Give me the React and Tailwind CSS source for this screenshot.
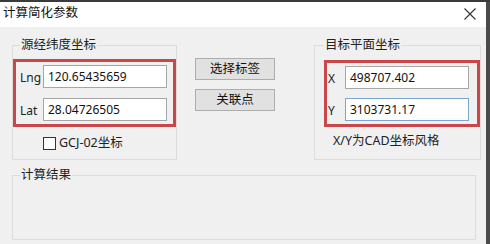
import React from "react";

const F = "font-['Noto_Sans','Noto_Sans_CJK_SC',sans-serif]";

function Field({ label, value, focused, labelW }) {
  return (
    <div className="flex items-center">
      <span className={`${labelW} text-[12px] leading-[16px] pt-[3px] text-[#222]`}>{label}</span>
      <div
        className={`w-[124px] h-[23px] bg-white border flex items-center pl-[4px] text-[12px] leading-[16px] text-[#111] ${
          focused ? "border-[#7aa6d2]" : "border-[#a6a6a6]"
        }`}
      >
        {value}
      </div>
    </div>
  );
}

export default function App() {
  return (
    <div className={`w-[490px] h-[244px] overflow-hidden flex flex-col bg-[#f0f0f0] text-black ${F}`}>
      <div className="h-[2px] bg-[#3a3a3a] shrink-0" />
      <div className="flex flex-1 min-h-0">
        <div className="w-[486px] flex flex-col">
          <div className="h-[25px] bg-white flex items-center justify-between pl-[3px] pr-[10px] shrink-0">
            <span className="text-[12.5px] leading-[16px] -mt-[3px] text-[#111]">计算简化参数</span>
            <svg width="12" height="12" viewBox="0 0 12 12" className="-mt-[2px]">
              <path d="M0.5 0.5 L11.5 11.5 M11.5 0.5 L0.5 11.5" stroke="#333" strokeWidth="1.1" fill="none" />
            </svg>
          </div>
          <div className="flex-1 flex flex-col pl-[12px] pt-[10px]">
            <div className="flex items-start">
              <fieldset className="w-[163px] h-[123px] border border-[#dcdcdc] p-0 m-0">
                <legend className="ml-[7px] px-[1px] text-[12.5px] leading-[16px] text-[#222]">源经纬度坐标</legend>
                <div className="w-[163px] mt-[6px] border-[3px] border-[#c9464b] pt-[3px] pl-[4px] pb-[3px] flex flex-col gap-[10px]">
                  <Field label="Lng" value="120.65435659" labelW="w-[23px]" />
                  <Field label="Lat" value="28.04726505" labelW="w-[23px]" />
                </div>
                <label className="flex items-center ml-[30px] mt-[8px]">
                  <span className="w-[13px] h-[13px] bg-white border border-[#333] shrink-0" />
                  <span className="ml-[3px] text-[12.5px] leading-[16px] text-[#222]">GCJ-02坐标</span>
                </label>
              </fieldset>
              <div className="ml-[18px] mt-[21px] flex flex-col gap-[9px]">
                <button className="w-[80px] h-[22px] bg-[#e1e1e1] border border-[#adadad] text-[12.5px] leading-[16px] text-[#111]">
                  选择标签
                </button>
                <button className="w-[80px] h-[22px] bg-[#e1e1e1] border border-[#adadad] text-[12.5px] leading-[16px] text-[#111]">
                  关联点
                </button>
              </div>
              <fieldset className="ml-[39px] w-[163px] h-[123px] border border-[#dcdcdc] p-0 m-0">
                <legend className="ml-[9px] px-[1px] text-[12.5px] leading-[16px] text-[#222]">目标平面坐标</legend>
                <div className="ml-[9px] w-[156px] mt-[7px] border-[3px] border-[#c9464b] pt-[3px] pb-[3px] flex flex-col gap-[9px]">
                  <Field label="X" value="498707.402" labelW="w-[18px] pl-[1px]" />
                  <Field label="Y" value="3103731.17" labelW="w-[18px] pl-[1px]" focused />
                </div>
                <div className="ml-[18px] mt-[6px] text-[12.5px] leading-[16px] text-[#222]">X/Y为CAD坐标风格</div>
              </fieldset>
            </div>
            <fieldset className="mt-[7px] w-[464px] h-[73px] border border-[#dcdcdc] p-0 m-0">
              <legend className="ml-[7px] px-[1px] text-[12.5px] leading-[16px] text-[#222]">计算结果</legend>
            </fieldset>
          </div>
        </div>
        <div className="w-[4px] bg-[#4a4a4a]" />
      </div>
    </div>
  );
}
